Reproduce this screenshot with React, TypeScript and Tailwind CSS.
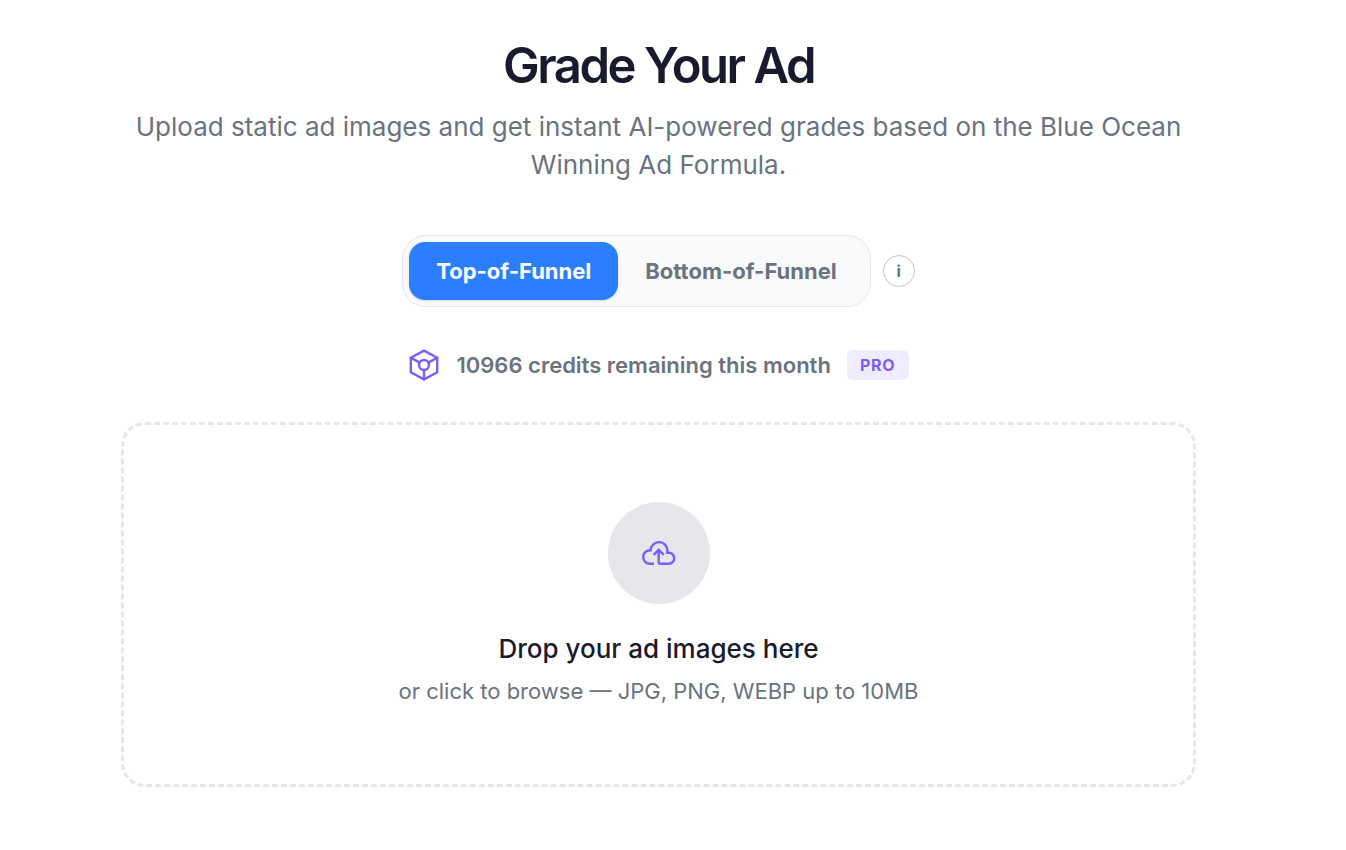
import { useState } from "react";

const FUNNELS = ["Top-of-Funnel", "Bottom-of-Funnel"];

function CreditIcon() {
  return (
    <svg width="32" height="32" viewBox="0 0 32 32" fill="none" stroke="currentColor" strokeWidth="2.4" strokeLinecap="round" strokeLinejoin="round" aria-hidden="true">
      <path d="M16 1.6 29.2 8.8v14.4L16 30.4 2.8 23.2V8.8Z" />
      <circle cx="16" cy="16" r="5" />
      <path d="M2.8 8.8l8.9 4.8M29.2 8.8l-8.9 4.8M16 21v9.4" />
    </svg>
  );
}

function UploadIcon() {
  return (
    <svg width="36" height="36" viewBox="0 0 36 36" fill="none" stroke="currentColor" strokeWidth="2.4" aria-hidden="true">
      <path d="M13 28.8H9A6.8 6.8 0 0 1 9 15.2H9.7A8.3 8.3 0 0 1 26.3 15.6V17.7H27.7A5.55 5.55 0 0 1 27.7 28.8H19.2A1.5 1.5 0 0 1 17.7 27.3V15" />
      <path d="M12.7 19.8 17.7 14.8l5 5" />
    </svg>
  );
}

export default function GradeAdPage() {
  const [funnel, setFunnel] = useState(FUNNELS[0]);

  return (
    <main className="min-h-screen bg-white pt-9 pb-16 pl-4 pr-[45px] font-['Inter',sans-serif] text-[#6b7280]">
      <div className="mx-auto flex max-w-[1075px] flex-col items-center">
        {/* Header */}
        <h1 className="text-[49px] leading-[60px] font-semibold tracking-tighter text-[#1a1a2e]">Grade Your Ad</h1>
        <p className="mt-3 text-center text-[26px] leading-[38px]">
          Upload static ad images and get instant AI-powered grades based on the Blue Ocean Winning Ad Formula.
        </p>

        {/* Funnel toggle */}
        <div className="mt-[51px] flex items-center gap-3">
          <div className="flex rounded-3xl border border-[#e5e7eb] bg-[#f9fafb] p-1.5">
            {FUNNELS.map(f => (
              <button
                key={f}
                type="button"
                aria-pressed={f === funnel}
                onClick={() => setFunnel(f)}
                className={`h-[58px] rounded-2xl px-[27px] text-[22px] font-bold ${f === funnel ? "bg-[#2b7fff] text-white shadow-sm" : "text-[#6b7280]"}`}
              >
                {f}
              </button>
            ))}
          </div>
          <button type="button" aria-label="About funnel stages" className="flex size-8 items-center justify-center rounded-full border border-[#c4c6cc] text-base font-bold">i</button>
        </div>

        {/* Credits */}
        <div className="mt-[42px] flex h-8 items-center">
          <span className="text-[#7c5cfc]"><CreditIcon /></span>
          <span className="ml-4 text-[22px] font-semibold">10966 credits remaining this month</span>
          <span className="ml-4 flex h-[30px] items-center rounded-md bg-[#f0ecff] px-[13px] text-base font-bold tracking-wider text-[#7c5cfc]">PRO</span>
        </div>

        {/* Dropzone */}
        <label className="mt-[41px] flex w-full cursor-pointer flex-col items-center rounded-3xl border-3 border-dashed border-[#e5e7eb] pt-[77px] pb-[75px]">
          <input type="file" accept=".jpg,.jpeg,.png,.webp" multiple className="sr-only" />
          <span className="flex size-[102px] items-center justify-center rounded-full bg-[#e5e7eb] text-[#7c5cfc]"><UploadIcon /></span>
          <span className="mt-[26px] text-[26px] leading-[38px] font-medium text-[#1a1a2e]">Drop your ad images here</span>
          <span className="mt-[5px] text-[22px] leading-9">or click to browse — JPG, PNG, WEBP up to 10MB</span>
        </label>
      </div>
    </main>
  );
}
